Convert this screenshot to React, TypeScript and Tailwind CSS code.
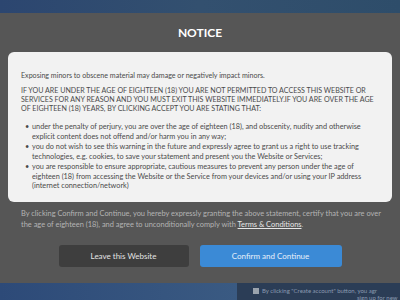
export default function App() {
    const bullets = [
        "under the penalty of perjury, you are over the age of eighteen (18), and obscenity, nudity and otherwise explicit content does not offend and/or harm you in any way;",
        "you do not wish to see this warning in the future and expressly agree to grant us a right to use tracking technologies, e.g. cookies, to save your statement and present you the Website or Services;",
        "you are responsible to ensure appropriate, cautious measures to prevent any person under the age of eighteen (18) from accessing the Website or the Service from your devices and/or using your IP address (internet connection/network)",
    ];

    return (
        <div className="w-[400px] h-[300px] overflow-hidden flex flex-col bg-[#2e4868] font-['Lato','Liberation_Sans',sans-serif]">
            <div className="h-[13px] shrink-0 bg-gradient-to-r from-[#2c4670] via-[#33506f] to-[#2e4d6a]" />
            <div className="h-[270px] shrink-0 bg-[#565656] flex flex-col">
                <h1 className="text-center text-white font-bold text-[12px] leading-none pt-[14px] pb-[13px]">NOTICE</h1>
                <div className="mx-[8px] bg-[#f2f2f2] rounded-[6px] h-[150px] pl-[13px] pr-[16px] pt-[19px] text-[#4a4a4a] text-[7.1px] leading-[9px]">
                    <p>Exposing minors to obscene material may damage or negatively impact minors.</p>
                    <p className="mt-[6px]">
                        IF YOU ARE UNDER THE AGE OF EIGHTEEN (18) YOU ARE NOT PERMITTED TO ACCESS THIS WEBSITE OR SERVICES FOR ANY REASON AND YOU MUST EXIT THIS WEBSITE IMMEDIATELY.IF YOU ARE OVER THE AGE OF EIGHTEEN (18) YEARS, BY CLICKING ACCEPT YOU ARE STATING THAT:
                    </p>
                    <ul className="mt-[9px] -mr-[3px] flex flex-col gap-[1px] text-[7.3px] leading-[9.5px]">
                        {bullets.map((b) => (
                            <li key={b} className="flex">
                                <span className="w-[11px] shrink-0 pl-[4px]">•</span>
                                <span>{b}</span>
                            </li>
                        ))}
                    </ul>
                </div>
                <p className="pl-[21px] pr-[12px] pt-[6px] text-[#b4b4b4] text-[7.45px] leading-[11px]">
                    By clicking Confirm and Continue, you hereby expressly granting the above statement, certify that you are over the age of eighteen (18), and agree to unconditionally comply with <u className="text-[#e6e6e6]">Terms &amp; Conditions</u>.
                </p>
                <div className="flex justify-center gap-[11px] mt-[15px]">
                    <button className="w-[130px] h-[22px] rounded-[3px] bg-[#3e3e3e] text-[#e4e4e4] text-[8px]">Leave this Website</button>
                    <button className="w-[142px] h-[22px] rounded-[3px] bg-[#3b8ad6] text-[#e8f0fa] text-[8px]">Confirm and Continue</button>
                </div>
            </div>
            <div className="flex-1 flex">
                <div className="w-[237px] bg-gradient-to-r from-[#2d4a78] to-[#3a5a82]" />
                <div className="flex-1 bg-[#2b3d56] pl-[16px] pt-[4px] flex gap-[3px] text-[#8a9ab0] text-[6px] leading-[7px]">
                    <span className="w-[6px] h-[6px] bg-[#9aa3ad] mt-[1px] shrink-0" />
                    <span className="whitespace-nowrap">By clicking "Create account" button, you agr<br /><span className="pl-[95px]">sign up for new</span></span>
                </div>
            </div>
        </div>
    );
}
